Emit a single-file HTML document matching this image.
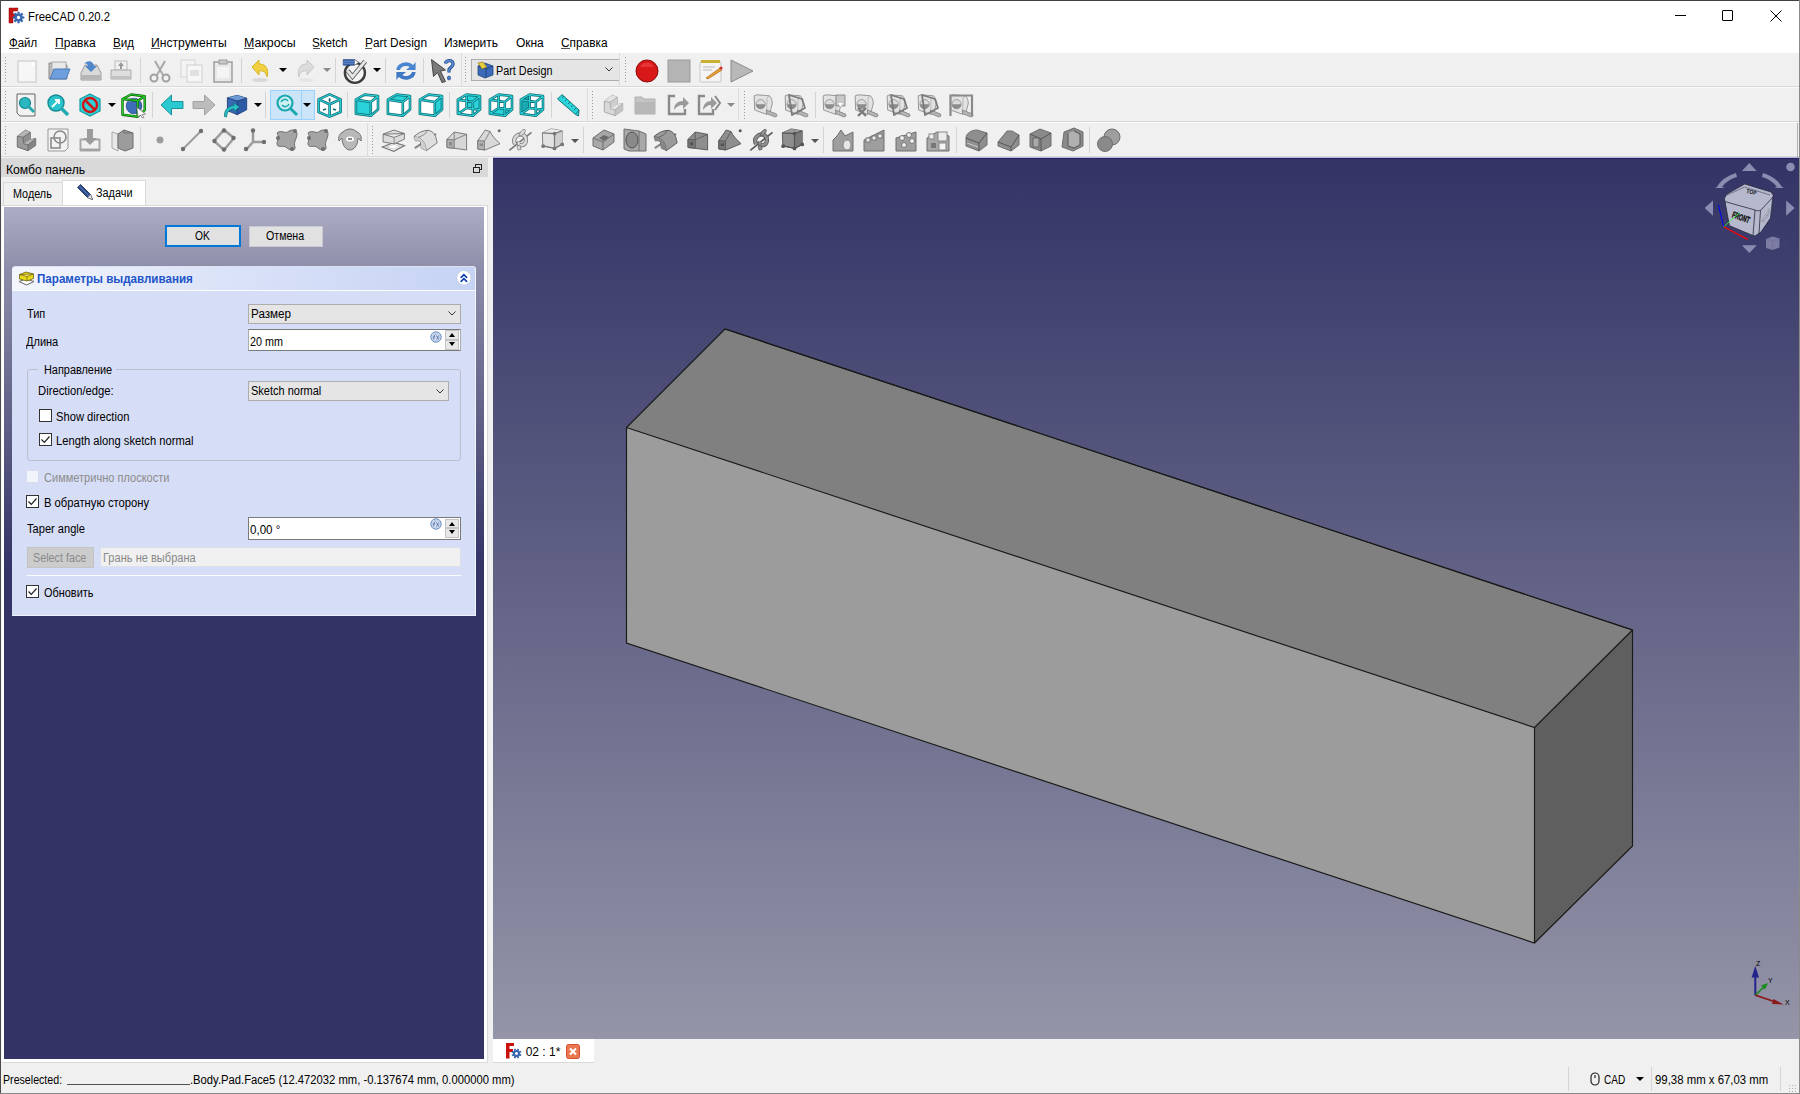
<!DOCTYPE html>
<html><head><meta charset="utf-8">
<style>
*{margin:0;padding:0;box-sizing:border-box}
html,body{width:1800px;height:1094px;overflow:hidden;background:#f0f0f0;font-family:"Liberation Sans",sans-serif;font-size:12px;color:#000}
.a{position:absolute}
.t{position:absolute;white-space:nowrap;line-height:12px;transform-origin:0 0}
svg.a{overflow:visible}
</style></head><body>
<div class="a" style="left:0px;top:0px;width:1800px;height:53px;background:#fff;"></div>
<div class="a" style="left:0px;top:0px;width:1800px;height:1px;background:#404040;"></div>
<div class="a" style="left:0px;top:0px;width:1px;height:1094px;background:#4a4a4a;"></div>
<svg class="a" style="left:7px;top:6px" width="18" height="19" viewBox="0 0 18 19"><path d="M2,2 h9 l-.5,3 H6 v3 h4 l-.5,3 H6 v6 H2 z" fill="#c81414" stroke="#8a0a0a" stroke-width=".5"/><g transform="translate(11.5,11.5)"><circle r="4" fill="#3a68b0"/><g fill="#3a68b0"><rect x="-1.1" y="-5.8" width="2.2" height="11.6" transform="rotate(0)"/><rect x="-1.1" y="-5.8" width="2.2" height="11.6" transform="rotate(45)"/><rect x="-1.1" y="-5.8" width="2.2" height="11.6" transform="rotate(90)"/><rect x="-1.1" y="-5.8" width="2.2" height="11.6" transform="rotate(135)"/></g><circle r="1.7" fill="#fff"/></g></svg>
<div class="t" style="left:28.2px;top:11px;transform:scaleX(0.9458);">FreeCAD 0.20.2</div>
<div class="a" style="left:1675px;top:15px;width:11px;height:1px;background:#000;"></div>
<div class="a" style="left:1722px;top:10px;width:11px;height:11px;background:transparent;border:1px solid #000;border-radius:1px"></div>
<svg class="a" style="left:1770px;top:10px" width="12" height="12" viewBox="0 0 12 12"><path d="M0.5 0.5l11 11M11.5 0.5l-11 11" stroke="#000" stroke-width="1"/></svg>
<div class="t" style="left:8.8px;top:37px;transform:scaleX(0.9525);">Файл</div>
<div class="t" style="left:55.1px;top:37px;">Правка</div>
<div class="t" style="left:112.8px;top:37px;transform:scaleX(0.9677);">Вид</div>
<div class="t" style="left:151.2px;top:37px;transform:scaleX(1.0107);">Инструменты</div>
<div class="t" style="left:244.0px;top:37px;transform:scaleX(1.0320);">Макросы</div>
<div class="t" style="left:312.2px;top:37px;transform:scaleX(0.9700);">Sketch</div>
<div class="t" style="left:364.7px;top:37px;transform:scaleX(0.9888);">Part Design</div>
<div class="t" style="left:443.9px;top:37px;">Измерить</div>
<div class="t" style="left:515.9px;top:37px;">Окна</div>
<div class="t" style="left:561.1px;top:37px;transform:scaleX(0.9873);">Справка</div>
<div class="a" style="left:9px;top:48px;width:10px;height:1px;background:#555;"></div>
<div class="a" style="left:55px;top:48px;width:9px;height:1px;background:#555;"></div>
<div class="a" style="left:113px;top:48px;width:8px;height:1px;background:#555;"></div>
<div class="a" style="left:151px;top:48px;width:9px;height:1px;background:#555;"></div>
<div class="a" style="left:244px;top:48px;width:10px;height:1px;background:#555;"></div>
<div class="a" style="left:313px;top:48px;width:7px;height:1px;background:#555;"></div>
<div class="a" style="left:365px;top:48px;width:7px;height:1px;background:#555;"></div>
<div class="a" style="left:561px;top:48px;width:9px;height:1px;background:#555;"></div>
<div class="a" style="left:1px;top:53px;width:1798px;height:104px;background:#f0f0f0;"></div>
<div class="a" style="left:1px;top:86px;width:1798px;height:1px;background:#d8d8d8;"></div>
<div class="a" style="left:1px;top:87px;width:1798px;height:1px;background:#fbfbfb;"></div>
<div class="a" style="left:1px;top:121px;width:1798px;height:1px;background:#d8d8d8;"></div>
<div class="a" style="left:1px;top:122px;width:1798px;height:1px;background:#fbfbfb;"></div>
<div class="a" style="left:1px;top:156px;width:1798px;height:1px;background:#d8d8d8;"></div>
<div class="a" style="left:5px;top:57px;width:1px;height:27px;background:repeating-linear-gradient(#9a9a9a 0 1px,transparent 1px 3px)"></div>
<svg class="a" style="left:15px;top:59px" width="24" height="24" viewBox="0 0 24 24"><rect x="3" y="2" width="18" height="21" fill="#f6f6f6" stroke="#c4c4c4"/><circle cx="18" cy="5" r="2" fill="#fff"/></svg>
<svg class="a" style="left:46px;top:59px" width="24" height="24" viewBox="0 0 24 24"><path d="M3 4h7l2 2h9v14H3z" fill="#bdbdbd" stroke="#8a8a8a"/><rect x="6" y="3" width="14" height="8" fill="#e8e8e8" stroke="#aaa"/><path d="M4 20l4-10h16l-4 10z" fill="#6f9fdc" stroke="#4a7cc0"/></svg>
<svg class="a" style="left:79px;top:59px" width="24" height="24" viewBox="0 0 24 24"><path d="M2 14l4-8h12l4 8v7H2z" fill="#d9d9d9" stroke="#9a9a9a"/><rect x="3" y="16" width="18" height="4" fill="#b5b5b5"/><path d="M5 5c3-4 9-4 10 2h3l-6 6-6-6h3c0-2-2-3-4-2z" fill="#4f86cc"/></svg>
<svg class="a" style="left:109px;top:59px" width="24" height="24" viewBox="0 0 24 24"><rect x="6" y="2" width="12" height="9" fill="#f0f0f0" stroke="#bbb"/><path d="M2 11h20v9H2z" fill="#dedede" stroke="#aaa"/><rect x="3" y="17" width="18" height="3" fill="#c2c2c2"/><path d="M12 3l-3 4h2v3h2V7h2z" fill="#999"/></svg>
<div class="a" style="left:140px;top:58px;width:1px;height:25px;background:#d4d4d4;"></div>
<svg class="a" style="left:148px;top:59px" width="24" height="24" viewBox="0 0 24 24"><path d="M7 2l8 14M17 2L9 16" stroke="#a8a8a8" stroke-width="2" fill="none"/><circle cx="6" cy="19" r="3.5" fill="none" stroke="#a0a0a0" stroke-width="2"/><circle cx="18" cy="19" r="3.5" fill="none" stroke="#a0a0a0" stroke-width="2"/></svg>
<svg class="a" style="left:179px;top:59px" width="24" height="24" viewBox="0 0 24 24"><rect x="2" y="1" width="14" height="17" fill="#f3f3f3" stroke="#d4d4d4"/><rect x="8" y="6" width="15" height="17" fill="#f6f6f6" stroke="#d0d0d0"/><rect x="11" y="11" width="9" height="6" fill="#e0e0e0"/></svg>
<svg class="a" style="left:211px;top:59px" width="24" height="24" viewBox="0 0 24 24"><rect x="3" y="3" width="18" height="20" fill="#e8e8e8" stroke="#9e9e9e" stroke-width="1.5"/><rect x="8" y="1" width="8" height="4" fill="#c8c8c8" stroke="#999"/><rect x="6" y="8" width="12" height="11" fill="#f4f4f4"/></svg>
<div class="a" style="left:241px;top:58px;width:1px;height:25px;background:#d4d4d4;"></div>
<svg class="a" style="left:248px;top:59px" width="24" height="24" viewBox="0 0 24 24"><path d="M4 8l7-7v4c7 0 10 5 8 13-1-5-4-7-8-6v4z" fill="#f0d040" stroke="#d8b420"/><ellipse cx="12" cy="21" rx="8" ry="2" fill="#d8d8d8"/></svg>
<div class="a" style="left:279px;top:68px;width:0;height:0;border-left:4px solid transparent;border-right:4px solid transparent;border-top:4px solid #000"></div>
<svg class="a" style="left:294px;top:59px" width="24" height="24" viewBox="0 0 24 24"><path d="M20 8l-7-7v4C6 5 3 10 5 18c1-5 4-7 8-6v4z" fill="#dcdcdc" stroke="#c8c8c8"/><ellipse cx="12" cy="21" rx="8" ry="2" fill="#e6e6e6"/></svg>
<div class="a" style="left:323px;top:68px;width:0;height:0;border-left:4px solid transparent;border-right:4px solid transparent;border-top:4px solid #8a8a8a"></div>
<div class="a" style="left:335px;top:58px;width:1px;height:25px;background:#d4d4d4;"></div>
<svg class="a" style="left:343px;top:59px" width="24" height="24" viewBox="0 0 24 24"><circle cx="11.9" cy="13.9" r="10" fill="#f4f4f4" stroke="#3c3c3c" stroke-width="2.4"/><path d="M4.6,11.8 L9.5,17.7 L22.2,2.2" fill="none" stroke="#5a5a5a" stroke-width="4.6"/><path d="M4.6,11.8 L9.5,17.7 L22.2,2.2" fill="none" stroke="#e6e6e6" stroke-width="2.8"/><path d="M0.2,0.6 H11.5 L15.7,3.3 L11.5,6.2 H0.2 Z" fill="#3a66b0" stroke="#1e3a70" stroke-width=".6"/><path d="M11.5,0.6 L15.7,3.3 L11.5,6.2 Z" fill="#fff" stroke="#555" stroke-width=".5"/><path d="M0.2,2.3 H11.5 M0.2,4.4 H11.5" stroke="#6a90d0" stroke-width=".7"/></svg>
<div class="a" style="left:373px;top:68px;width:0;height:0;border-left:4px solid transparent;border-right:4px solid transparent;border-top:4px solid #000"></div>
<div class="a" style="left:385px;top:58px;width:1px;height:25px;background:#d4d4d4;"></div>
<svg class="a" style="left:394px;top:59px" width="24" height="24" viewBox="0 0 24 24"><g transform="translate(-2.4,0) scale(1.2,1)"><path d="M4 11a8 8 0 0 1 14-5l2-3v8h-8l3-3a5 5 0 0 0-8 3z" fill="#4a86d0"/><path d="M20 13a8 8 0 0 1-14 5l-2 3v-8h8l-3 3a5 5 0 0 0 8-3z" fill="#3f78c4"/></g></svg>
<div class="a" style="left:423px;top:58px;width:1px;height:25px;background:#d4d4d4;"></div>
<svg class="a" style="left:431px;top:59px" width="24" height="24" viewBox="0 0 24 24"><path d="M0.5,0.5 L14.5,11 L9.5,12 L14.5,22.5 L11,23.5 L6.5,13.5 L2.5,17.5 Z" fill="#7a7a7a" stroke="#3a3a3a" stroke-width=".9" stroke-linejoin="round"/><path d="M14.5,4.5 C15,1 21,0.5 22,4 C23,7 19,8.5 18,10.5 V13.5" fill="none" stroke="#1e4c90" stroke-width="3.2"/><path d="M14.5,4.5 C15,1 21,0.5 22,4 C23,7 19,8.5 18,10.5 V13.5" fill="none" stroke="#5a8ad0" stroke-width="1.6"/><ellipse cx="18" cy="19" rx="1.6" ry="2" fill="#4a7ac8" stroke="#1e4c90" stroke-width=".7"/></svg>
<div class="a" style="left:461px;top:53px;width:1px;height:34px;background:#dcdcdc;"></div>
<div class="a" style="left:465px;top:57px;width:1px;height:27px;background:repeating-linear-gradient(#9a9a9a 0 1px,transparent 1px 3px)"></div>
<div class="a" style="left:471px;top:59px;width:149px;height:22px;background:#e5e5e5;border:1px solid #adadad"></div>
<svg class="a" style="left:477px;top:62px" width="17" height="16" viewBox="0 0 17 16"><path d="M1 4l7-3 8 3v9l-8 3-7-3z" fill="#3a6ab8" stroke="#1c3a70" stroke-width=".7"/><path d="M1 4l8 3 7-3M9 7v9" stroke="#1c3a70" stroke-width=".7" fill="none"/><path d="M1 1l5-1 4 5-5 2z" fill="#e8d040" stroke="#806010" stroke-width=".6"/></svg>
<div class="t" style="left:496.1px;top:65px;transform:scaleX(0.9011);">Part Design</div>
<svg class="a" style="left:605px;top:67px" width="8" height="5" viewBox="0 0 8 5"><path d="M0.5 0.5L4 4l3.5-3.5" stroke="#333" fill="none"/></svg>
<div class="a" style="left:619px;top:53px;width:1px;height:34px;background:#dcdcdc;"></div>
<div class="a" style="left:625px;top:57px;width:1px;height:27px;background:repeating-linear-gradient(#9a9a9a 0 1px,transparent 1px 3px)"></div>
<svg class="a" style="left:635px;top:59px" width="24" height="24" viewBox="0 0 24 24"><circle cx="12" cy="12" r="11" fill="#d81818" stroke="#8a0c0c"/><path d="M5 8a8 8 0 0 1 14 0" fill="#ec4a4a" opacity=".6"/></svg>
<svg class="a" style="left:667px;top:59px" width="24" height="24" viewBox="0 0 24 24"><rect x="1" y="1" width="22" height="22" fill="#b4b4b4" stroke="#9a9a9a"/></svg>
<svg class="a" style="left:699px;top:59px" width="24" height="24" viewBox="0 0 24 24"><rect x="1" y="3" width="21" height="20" rx="1" fill="#f4f4f4" stroke="#c8c8c8"/><rect x="2" y="1" width="19" height="3" fill="#c8b030"/><path d="M4 8h12M4 11h9" stroke="#bbb"/><path d="M7 19l14-10 2 2-14 9z" fill="#e8a030" stroke="#a06010" stroke-width=".6"/><circle cx="22" cy="9" r="1.6" fill="#d03030"/></svg>
<svg class="a" style="left:730px;top:59px" width="24" height="24" viewBox="0 0 24 24"><path d="M1 1l22 11L1 23z" fill="#b8b8b8" stroke="#8a8a8a"/></svg>
<div class="a" style="left:5px;top:91px;width:1px;height:28px;background:repeating-linear-gradient(#9a9a9a 0 1px,transparent 1px 3px)"></div>
<svg class="a" style="left:15px;top:93px" width="24" height="24" viewBox="0 0 24 24"><path d="M2 1h18v22H5l-3-3z" fill="#f2f2f2" stroke="#666"/><circle cx="10" cy="10" r="5.5" fill="#2ab8c0" stroke="#118890" stroke-width="1.2"/><path d="M14 14l5 5" stroke="#22a8b0" stroke-width="3"/></svg>
<svg class="a" style="left:46px;top:93px" width="24" height="24" viewBox="0 0 24 24"><circle cx="10" cy="10" r="8" fill="#2cc4cc" stroke="#108a92" stroke-width="1.4"/><path d="M15 15l7 7" stroke="#22aab2" stroke-width="3.5"/><path d="M6 14l7-7m-4 0h4v4" stroke="#fff" stroke-width="1.8" fill="none"/></svg>
<svg class="a" style="left:78px;top:93px" width="24" height="24" viewBox="0 0 24 24"><path d="M12 1l10 5v12l-10 5-10-5V6z" fill="#30d0d8" stroke="#129aa2" stroke-width="1.2"/><circle cx="12" cy="12" r="7" fill="none" stroke="#d01818" stroke-width="2.5"/><path d="M7 7l10 10" stroke="#d01818" stroke-width="2.5"/></svg>
<div class="a" style="left:108px;top:103px;width:0;height:0;border-left:4px solid transparent;border-right:4px solid transparent;border-top:4px solid #000"></div>
<svg class="a" style="left:122px;top:93px" width="24" height="24" viewBox="0 0 24 24"><path d="M0.5,6 L9.2,1.5 L22.7,3.2 L22.7,17.2 L15.7,23.7 L0.5,21.7 Z" fill="#f4f4f4"/><circle cx="12" cy="13" r="7.8" fill="#3d6cb8" stroke="#1c3c78" stroke-width=".7"/><path d="M7,9 a6,6 0 0 1 8,-2" stroke="#8ab0e8" stroke-width="1.2" fill="none"/><path d="M0.5,6 L9.2,1.5 L22.7,3.2 L22.7,17.2 L15.7,23.7 L0.5,21.7 Z M0.5,6 L15.7,7.7 L22.7,3.2 M15.7,7.7 V23.7" fill="none" stroke="#0c5a0c" stroke-width="2.4" stroke-linejoin="round"/><path d="M0.5,6 L9.2,1.5 L22.7,3.2 L22.7,17.2 L15.7,23.7 L0.5,21.7 Z M0.5,6 L15.7,7.7 L22.7,3.2 M15.7,7.7 V23.7" fill="none" stroke="#22cc22" stroke-width="1.2" stroke-linejoin="round"/><path d="M14.9,14.3 L23.5,21 L20,21.5 L22,24.5 L20.5,25 L18.5,22 L16,24 Z" fill="#fff" stroke="#666" stroke-width=".7"/></svg>
<div class="a" style="left:152px;top:92px;width:1px;height:26px;background:#d4d4d4;"></div>
<svg class="a" style="left:160px;top:93px" width="24" height="24" viewBox="0 0 24 24"><path d="M1,12 L11.5,2 V8.5 H23 V15.5 H11.5 V22 Z" fill="#2ac8d0" stroke="#0e8a92" stroke-width=".9" stroke-linejoin="round"/></svg>
<svg class="a" style="left:192px;top:93px" width="24" height="24" viewBox="0 0 24 24"><path d="M23,12 L12.5,2 V8.5 H1 V15.5 H12.5 V22 Z" fill="#bcbcbc" stroke="#9c9c9c" stroke-width=".9" stroke-linejoin="round"/></svg>
<svg class="a" style="left:224px;top:93px" width="24" height="24" viewBox="0 0 24 24"><path d="M3.4,4.8 L13.2,2.3 L22.7,5.2 L22.7,16.7 L13.2,21.7 L3.4,17.6 Z" fill="#3a6ab6" stroke="#1a3468" stroke-width=".8" stroke-linejoin="round"/><path d="M3.4,4.8 L13.2,2.3 L22.7,5.2 L13.2,8.1 Z" fill="#6a9ad8"/><path d="M13.2,8.1 L22.7,5.2 L22.7,16.7 L13.2,21.7 Z" fill="#2c5aa4"/><path d="M3.4,4.8 L13.2,8.1 L22.7,5.2 M13.2,8.1 V21.7" stroke="#1a3468" stroke-width=".8" fill="none"/><path d="M0.5,23.5 C0,17 4,13 10,12.5 L9.5,9.5 L15.5,14 L10,18.5 L10,15.8 C6,16 3,18.5 2.5,24 Z" fill="#28c0c8" stroke="#0b6a70" stroke-width=".7" stroke-linejoin="round"/></svg>
<div class="a" style="left:254px;top:103px;width:0;height:0;border-left:4px solid transparent;border-right:4px solid transparent;border-top:4px solid #000"></div>
<div class="a" style="left:265px;top:92px;width:1px;height:26px;background:#d4d4d4;"></div>
<div class="a" style="left:270px;top:90px;width:45px;height:30px;background:#cce4f7;border:1px solid #99d1ff"></div>
<div class="a" style="left:301px;top:91px;width:1px;height:28px;background:#99d1ff;"></div>
<svg class="a" style="left:275px;top:93px" width="24" height="24" viewBox="0 0 24 24"><circle cx="10" cy="10" r="7.5" fill="#ccf0f2" stroke="#1aa8b0" stroke-width="2.2"/><path d="M15 15l7 7" stroke="#1aa8b0" stroke-width="3"/><path d="M6 9a4 4 0 0 1 7-1m1 3a4 4 0 0 1-7 1" stroke="#1aa8b0" stroke-width="1.5" fill="none"/></svg>
<div class="a" style="left:303px;top:103px;width:0;height:0;border-left:4px solid transparent;border-right:4px solid transparent;border-top:4px solid #000"></div>
<svg class="a" style="left:318px;top:93px" width="24" height="24" viewBox="0 0 24 24"><path d="M11.6,1.4 L22.6,6.4 L22.6,19 L11.6,23.6 L0.6,19 L0.6,6.4 Z" fill="#fff"/><path d="M11.6,1.4 L22.6,6.4 L22.6,19 L11.6,23.6 L0.6,19 L0.6,6.4 Z M0.6,6.4 L11.6,11.2 L22.6,6.4 M11.6,11.2 L11.6,23.6" fill="none" stroke="#0d6a70" stroke-width="2.6" stroke-linejoin="round"/><path d="M11.6,1.4 L22.6,6.4 L22.6,19 L11.6,23.6 L0.6,19 L0.6,6.4 Z M0.6,6.4 L11.6,11.2 L22.6,6.4 M11.6,11.2 L11.6,23.6" fill="none" stroke="#2ad2da" stroke-width="1.1" stroke-linejoin="round"/><ellipse cx="11.6" cy="7" rx="1" ry="2" fill="#0d6a70"/><path d="M5 17l3-1M15 16l3 1" stroke="#0d6a70" stroke-width="1.6"/></svg>
<div class="a" style="left:347px;top:92px;width:1px;height:26px;background:#d4d4d4;"></div>
<svg class="a" style="left:355px;top:93px" width="24" height="24" viewBox="0 0 24 24"><path d="M0.9,6.6 L15.8,9 L15.8,22.8 L0.9,20.8 Z" fill="#2ad2da"/><path d="M0.9,6.6 L9.6,1.6 L23,3 L15.8,9 Z M15.8,9 L23,3 L23,16.6 L15.8,22.8 Z" fill="#fff"/><path d="M0.9,6.6 L9.6,1.6 L23,3 L23,16.6 L15.8,22.8 L0.9,20.8 Z M0.9,6.6 L15.8,9 L23,3 M15.8,9 L15.8,22.8" fill="none" stroke="#0d6a70" stroke-width="2.6" stroke-linejoin="round"/><path d="M0.9,6.6 L9.6,1.6 L23,3 L23,16.6 L15.8,22.8 L0.9,20.8 Z M0.9,6.6 L15.8,9 L23,3 M15.8,9 L15.8,22.8" fill="none" stroke="#2ad2da" stroke-width="1.1" stroke-linejoin="round"/></svg>
<svg class="a" style="left:387px;top:93px" width="24" height="24" viewBox="0 0 24 24"><path d="M0.9,6.6 L9.6,1.6 L23,3 L15.8,9 Z" fill="#2ad2da"/><path d="M0.9,6.6 L15.8,9 L15.8,22.8 L0.9,20.8 Z M15.8,9 L23,3 L23,16.6 L15.8,22.8 Z" fill="#fff"/><path d="M0.9,6.6 L9.6,1.6 L23,3 L23,16.6 L15.8,22.8 L0.9,20.8 Z M0.9,6.6 L15.8,9 L23,3 M15.8,9 L15.8,22.8" fill="none" stroke="#0d6a70" stroke-width="2.6" stroke-linejoin="round"/><path d="M0.9,6.6 L9.6,1.6 L23,3 L23,16.6 L15.8,22.8 L0.9,20.8 Z M0.9,6.6 L15.8,9 L23,3 M15.8,9 L15.8,22.8" fill="none" stroke="#2ad2da" stroke-width="1.1" stroke-linejoin="round"/></svg>
<svg class="a" style="left:419px;top:93px" width="24" height="24" viewBox="0 0 24 24"><path d="M15.8,9 L23,3 L23,16.6 L15.8,22.8 Z" fill="#2ad2da"/><path d="M0.9,6.6 L15.8,9 L15.8,22.8 L0.9,20.8 Z M0.9,6.6 L9.6,1.6 L23,3 L15.8,9 Z" fill="#fff"/><path d="M0.9,6.6 L9.6,1.6 L23,3 L23,16.6 L15.8,22.8 L0.9,20.8 Z M0.9,6.6 L15.8,9 L23,3 M15.8,9 L15.8,22.8" fill="none" stroke="#0d6a70" stroke-width="2.6" stroke-linejoin="round"/><path d="M0.9,6.6 L9.6,1.6 L23,3 L23,16.6 L15.8,22.8 L0.9,20.8 Z M0.9,6.6 L15.8,9 L23,3 M15.8,9 L15.8,22.8" fill="none" stroke="#2ad2da" stroke-width="1.1" stroke-linejoin="round"/></svg>
<div class="a" style="left:449px;top:92px;width:1px;height:26px;background:#d4d4d4;"></div>
<svg class="a" style="left:457px;top:93px" width="24" height="24" viewBox="0 0 24 24"><path d="M0.9,6.6 L9.6,1.6 L23,3 L23,16.6 L15.8,22.8 L0.9,20.8 Z" fill="#fff"/><path d="M9.6,1.6 L23,3 L23,16.6 L9.6,15 Z" fill="#2ad2da"/><path d="M0.9,6.6 L9.6,1.6 L23,3 L23,16.6 L15.8,22.8 L0.9,20.8 Z M0.9,6.6 L15.8,9 L23,3 M15.8,9 L15.8,22.8 M9.6,1.6 L9.6,15 L23,16.6 M9.6,15 L0.9,20.8" fill="none" stroke="#0d6a70" stroke-width="2.6" stroke-linejoin="round"/><path d="M0.9,6.6 L9.6,1.6 L23,3 L23,16.6 L15.8,22.8 L0.9,20.8 Z M0.9,6.6 L15.8,9 L23,3 M15.8,9 L15.8,22.8 M9.6,1.6 L9.6,15 L23,16.6 M9.6,15 L0.9,20.8" fill="none" stroke="#2ad2da" stroke-width="1.1" stroke-linejoin="round"/></svg>
<svg class="a" style="left:489px;top:93px" width="24" height="24" viewBox="0 0 24 24"><path d="M0.9,6.6 L9.6,1.6 L23,3 L23,16.6 L15.8,22.8 L0.9,20.8 Z" fill="#fff"/><path d="M0.9,20.8 L9.6,15 L23,16.6 L15.8,22.8 Z" fill="#2ad2da"/><path d="M0.9,6.6 L9.6,1.6 L23,3 L23,16.6 L15.8,22.8 L0.9,20.8 Z M0.9,6.6 L15.8,9 L23,3 M15.8,9 L15.8,22.8 M9.6,1.6 L9.6,15 L23,16.6 M9.6,15 L0.9,20.8" fill="none" stroke="#0d6a70" stroke-width="2.6" stroke-linejoin="round"/><path d="M0.9,6.6 L9.6,1.6 L23,3 L23,16.6 L15.8,22.8 L0.9,20.8 Z M0.9,6.6 L15.8,9 L23,3 M15.8,9 L15.8,22.8 M9.6,1.6 L9.6,15 L23,16.6 M9.6,15 L0.9,20.8" fill="none" stroke="#2ad2da" stroke-width="1.1" stroke-linejoin="round"/></svg>
<svg class="a" style="left:520px;top:93px" width="24" height="24" viewBox="0 0 24 24"><path d="M0.9,6.6 L9.6,1.6 L23,3 L23,16.6 L15.8,22.8 L0.9,20.8 Z" fill="#fff"/><path d="M0.9,6.6 L9.6,1.6 L9.6,15 L0.9,20.8 Z" fill="#1aaab2"/><path d="M0.9,6.6 L9.6,1.6 L23,3 L23,16.6 L15.8,22.8 L0.9,20.8 Z M0.9,6.6 L15.8,9 L23,3 M15.8,9 L15.8,22.8 M9.6,1.6 L9.6,15 L23,16.6 M9.6,15 L0.9,20.8" fill="none" stroke="#0d6a70" stroke-width="2.6" stroke-linejoin="round"/><path d="M0.9,6.6 L9.6,1.6 L23,3 L23,16.6 L15.8,22.8 L0.9,20.8 Z M0.9,6.6 L15.8,9 L23,3 M15.8,9 L15.8,22.8 M9.6,1.6 L9.6,15 L23,16.6 M9.6,15 L0.9,20.8" fill="none" stroke="#2ad2da" stroke-width="1.1" stroke-linejoin="round"/></svg>
<div class="a" style="left:551px;top:92px;width:1px;height:26px;background:#d4d4d4;"></div>
<svg class="a" style="left:556px;top:93px" width="24" height="24" viewBox="0 0 24 24"><path d="M1.5,6 L6,1.5 L23,17 L22.5,23 L19.5,21.5 Z" fill="#2ad2da" stroke="#0d6a70" stroke-width=".9" stroke-linejoin="round"/><path d="M19.5,21.5 L23,17" stroke="#0d6a70" stroke-width=".8"/><path d="M6,5 l2,-2 M9,8 l1.5,-1.5 M12,11 l2,-2 M15,14 l1.5,-1.5 M18,17 l2,-2" stroke="#0d6a70" stroke-width=".9"/></svg>
<div class="a" style="left:587px;top:88px;width:1px;height:33px;background:#dcdcdc;"></div>
<div class="a" style="left:592px;top:91px;width:1px;height:28px;background:repeating-linear-gradient(#9a9a9a 0 1px,transparent 1px 3px)"></div>
<svg class="a" style="left:602px;top:93px" width="24" height="24" viewBox="0 0 24 24"><path d="M2.3,8.3 L10.3,2 L15.3,4.3 L15.3,11.5 L20.7,10.5 L20.7,17.5 L13,22.7 L2.3,19 Z" fill="#d8d8d8" stroke="#a4a4a4" stroke-width=".9" stroke-linejoin="round"/><path d="M2.3,8.3 L10.3,2 L15.3,4.3 L8,9.3 Z" fill="#e4e4e4"/><path d="M8,9.3 L15.3,4.3 L15.3,11.5 L8.7,15.7 Z" fill="#cfcfcf"/><path d="M8.7,15.7 L15.3,11.5 L20.7,10.5 L13,17 Z" fill="#e4e4e4"/><path d="M13,17 L20.7,10.5 L20.7,17.5 L13,22.7 Z" fill="#c4c4c4"/><path d="M2.3,8.3 L8,9.3 L15.3,4.3 M8,9.3 L8.7,15.7 L13,17 L20.7,10.5 M13,17 L13,22.7" fill="none" stroke="#a4a4a4" stroke-width=".8"/></svg>
<svg class="a" style="left:633px;top:93px" width="24" height="24" viewBox="0 0 24 24"><path d="M2 4h7l2 2h11v15H2z" fill="#c4c4c4" stroke="#b0b0b0"/><path d="M2 9h20v12H2z" fill="#b8b8b8"/></svg>
<svg class="a" style="left:666px;top:93px" width="24" height="24" viewBox="0 0 24 24"><path d="M3 7V3h6M3 7v14h16v-5" stroke="#8a8a8a" stroke-width="2.4" fill="none"/><path d="M8 17c0-6 4-9 9-9V4l6 6-6 6v-4c-4 0-7 2-9 5z" fill="#9a9a9a"/></svg>
<svg class="a" style="left:697px;top:93px" width="24" height="24" viewBox="0 0 24 24"><path d="M2 7V3h6M2 7v14h14v-5" stroke="#8a8a8a" stroke-width="2.4" fill="none"/><path d="M6 17c0-6 4-9 8-9V4l6 6-6 6v-4c-3 0-6 2-8 5z" fill="#9a9a9a"/><path d="M18 3l5 7-5 7" stroke="#8a8a8a" stroke-width="2" fill="none"/></svg>
<div class="a" style="left:727px;top:103px;width:0;height:0;border-left:4px solid transparent;border-right:4px solid transparent;border-top:4px solid #8a8a8a"></div>
<div class="a" style="left:738px;top:88px;width:1px;height:33px;background:#dcdcdc;"></div>
<div class="a" style="left:744px;top:91px;width:1px;height:28px;background:repeating-linear-gradient(#9a9a9a 0 1px,transparent 1px 3px)"></div>
<svg class="a" style="left:754px;top:93px" width="24" height="24" viewBox="0 0 24 24"><path d="M0.2,2.8 L3,1.8 L15.4,2.8 C17.5,5 18.5,8 18.2,11 L16,19 L12.7,21.4 L0.6,17 Z" fill="#e2e2e2" stroke="#8e8e8e" stroke-width=".9" stroke-linejoin="round"/><path d="M12.7,21.4 L13,5 L15.4,2.8" stroke="#a8a8a8" stroke-width=".7" fill="none"/><path d="M12.5,17 L22.5,21 L23,23 L21,24 L12.5,20.5 Z" fill="#b4b4b4" stroke="#808080" stroke-width=".8"/><circle cx="6.6" cy="11.2" r="4.6" fill="#dcdcdc" stroke="#8a8a8a" stroke-width=".8"/><path d="M2,11.2 A4.6,4.6 0 0 0 11.2,11.2 Z" fill="#8c8c8c"/></svg>
<svg class="a" style="left:785px;top:93px" width="24" height="24" viewBox="0 0 24 24"><path d="M0.2,2.8 L3,1.8 L15.4,2.8 C17.5,5 18.5,8 18.2,11 L16,19 L12.7,21.4 L0.6,17 Z" fill="#e2e2e2" stroke="#8e8e8e" stroke-width=".9" stroke-linejoin="round"/><path d="M12.7,21.4 L13,5 L15.4,2.8" stroke="#a8a8a8" stroke-width=".7" fill="none"/><path d="M12.5,17 L22.5,21 L23,23 L21,24 L12.5,20.5 Z" fill="#b4b4b4" stroke="#808080" stroke-width=".8"/><circle cx="6.6" cy="11.2" r="4.6" fill="#dcdcdc" stroke="#8a8a8a" stroke-width=".8"/><path d="M2,11.2 A4.6,4.6 0 0 0 11.2,11.2 Z" fill="#8c8c8c"/><path d="M4,2 L17,6 L20,15 L7,22 Z" fill="none" stroke="#7a7a7a" stroke-width="1.8" stroke-linejoin="round"/></svg>
<div class="a" style="left:815px;top:92px;width:1px;height:26px;background:#d4d4d4;"></div>
<svg class="a" style="left:823px;top:93px" width="24" height="24" viewBox="0 0 24 24"><path d="M0.2,2.8 L3,1.8 L15.4,2.8 C17.5,5 18.5,8 18.2,11 L16,19 L12.7,21.4 L0.6,17 Z" fill="#e2e2e2" stroke="#8e8e8e" stroke-width=".9" stroke-linejoin="round"/><path d="M12.7,21.4 L13,5 L15.4,2.8" stroke="#a8a8a8" stroke-width=".7" fill="none"/><path d="M12.5,17 L22.5,21 L23,23 L21,24 L12.5,20.5 Z" fill="#b4b4b4" stroke="#808080" stroke-width=".8"/><circle cx="6.6" cy="11.2" r="4.6" fill="#dcdcdc" stroke="#8a8a8a" stroke-width=".8"/><path d="M2,11.2 A4.6,4.6 0 0 0 11.2,11.2 Z" fill="#8c8c8c"/><path d="M13,2 h9 v11 h-9 z" fill="#c8c8c8" stroke="#7a7a7a" stroke-width=".8"/><path d="M15,10 l5,0 -2.5,4 z" fill="#fff"/></svg>
<svg class="a" style="left:855px;top:93px" width="24" height="24" viewBox="0 0 24 24"><path d="M0.2,2.8 L3,1.8 L15.4,2.8 C17.5,5 18.5,8 18.2,11 L16,19 L12.7,21.4 L0.6,17 Z" fill="#e2e2e2" stroke="#8e8e8e" stroke-width=".9" stroke-linejoin="round"/><path d="M12.7,21.4 L13,5 L15.4,2.8" stroke="#a8a8a8" stroke-width=".7" fill="none"/><path d="M12.5,17 L22.5,21 L23,23 L21,24 L12.5,20.5 Z" fill="#b4b4b4" stroke="#808080" stroke-width=".8"/><circle cx="6.6" cy="11.2" r="4.6" fill="#dcdcdc" stroke="#8a8a8a" stroke-width=".8"/><path d="M2,11.2 A4.6,4.6 0 0 0 11.2,11.2 Z" fill="#8c8c8c"/><path d="M3,15 L11,23 M11,15 L3,23" stroke="#7a7a7a" stroke-width="2.4"/></svg>
<svg class="a" style="left:887px;top:93px" width="24" height="24" viewBox="0 0 24 24"><path d="M0.2,2.8 L3,1.8 L15.4,2.8 C17.5,5 18.5,8 18.2,11 L16,19 L12.7,21.4 L0.6,17 Z" fill="#e2e2e2" stroke="#8e8e8e" stroke-width=".9" stroke-linejoin="round"/><path d="M12.7,21.4 L13,5 L15.4,2.8" stroke="#a8a8a8" stroke-width=".7" fill="none"/><path d="M12.5,17 L22.5,21 L23,23 L21,24 L12.5,20.5 Z" fill="#b4b4b4" stroke="#808080" stroke-width=".8"/><circle cx="6.6" cy="11.2" r="4.6" fill="#dcdcdc" stroke="#8a8a8a" stroke-width=".8"/><path d="M2,11.2 A4.6,4.6 0 0 0 11.2,11.2 Z" fill="#8c8c8c"/><path d="M4,2 L17,6 L20,15 L7,22 Z" fill="none" stroke="#7a7a7a" stroke-width="1.8" stroke-linejoin="round"/></svg>
<svg class="a" style="left:918px;top:93px" width="24" height="24" viewBox="0 0 24 24"><path d="M0.2,2.8 L3,1.8 L15.4,2.8 C17.5,5 18.5,8 18.2,11 L16,19 L12.7,21.4 L0.6,17 Z" fill="#e2e2e2" stroke="#8e8e8e" stroke-width=".9" stroke-linejoin="round"/><path d="M12.7,21.4 L13,5 L15.4,2.8" stroke="#a8a8a8" stroke-width=".7" fill="none"/><path d="M12.5,17 L22.5,21 L23,23 L21,24 L12.5,20.5 Z" fill="#b4b4b4" stroke="#808080" stroke-width=".8"/><circle cx="6.6" cy="11.2" r="4.6" fill="#dcdcdc" stroke="#8a8a8a" stroke-width=".8"/><path d="M2,11.2 A4.6,4.6 0 0 0 11.2,11.2 Z" fill="#8c8c8c"/><path d="M4,2 L17,6 L20,15 L7,22 Z" fill="none" stroke="#7a7a7a" stroke-width="1.8" stroke-linejoin="round"/></svg>
<svg class="a" style="left:950px;top:93px" width="24" height="24" viewBox="0 0 24 24"><path d="M0.2,2.8 L3,1.8 L15.4,2.8 C17.5,5 18.5,8 18.2,11 L16,19 L12.7,21.4 L0.6,17 Z" fill="#e2e2e2" stroke="#8e8e8e" stroke-width=".9" stroke-linejoin="round"/><path d="M12.7,21.4 L13,5 L15.4,2.8" stroke="#a8a8a8" stroke-width=".7" fill="none"/><path d="M12.5,17 L22.5,21 L23,23 L21,24 L12.5,20.5 Z" fill="#b4b4b4" stroke="#808080" stroke-width=".8"/><circle cx="6.6" cy="11.2" r="4.6" fill="#dcdcdc" stroke="#8a8a8a" stroke-width=".8"/><path d="M2,11.2 A4.6,4.6 0 0 0 11.2,11.2 Z" fill="#8c8c8c"/><path d="M0.5,23 V2.5 H22 V23" fill="none" stroke="#8a8a8a" stroke-width="2.2"/></svg>
<div class="a" style="left:5px;top:126px;width:1px;height:28px;background:repeating-linear-gradient(#9a9a9a 0 1px,transparent 1px 3px)"></div>
<svg class="a" style="left:15px;top:128px" width="24" height="24" viewBox="0 0 24 24"><path d="M2.3,8.3 L10.3,2 L15.3,4.3 L15.3,11.5 L20.7,10.5 L20.7,17.5 L13,22.7 L2.3,19 Z" fill="#9a9a9a" stroke="#666" stroke-width=".9" stroke-linejoin="round"/><path d="M2.3,8.3 L10.3,2 L15.3,4.3 L8,9.3 Z" fill="#b4b4b4"/><path d="M8,9.3 L15.3,4.3 L15.3,11.5 L8.7,15.7 Z" fill="#8e8e8e"/><path d="M8.7,15.7 L15.3,11.5 L20.7,10.5 L13,17 Z" fill="#b4b4b4"/><path d="M13,17 L20.7,10.5 L20.7,17.5 L13,22.7 Z" fill="#858585"/><path d="M2.3,8.3 L8,9.3 L15.3,4.3 M8,9.3 L8.7,15.7 L13,17 L20.7,10.5 M13,17 L13,22.7" fill="none" stroke="#666" stroke-width=".8"/></svg>
<svg class="a" style="left:46px;top:128px" width="24" height="24" viewBox="0 0 24 24"><path d="M2 1h20v19l-3 3H2z" fill="#f2f2f2" stroke="#999"/><rect x="5" y="10" width="9" height="10" fill="none" stroke="#8a8a8a" stroke-width="1.6"/><circle cx="14" cy="9" r="6" fill="none" stroke="#8a8a8a" stroke-width="1.6"/></svg>
<svg class="a" style="left:78px;top:128px" width="24" height="24" viewBox="0 0 24 24"><path d="M3 12h4v-1H2v12h20V11h-5v1h4v9H3z" fill="#9c9c9c" stroke="#aaa"/><path d="M9 1h6v9h4l-7 7-7-7h4z" fill="#9c9c9c"/></svg>
<svg class="a" style="left:110px;top:128px" width="24" height="24" viewBox="0 0 24 24"><path d="M2 4l6 2v17l-6-3z" fill="#e8e8e8" stroke="#aaa"/><path d="M8 6l6-4 9 3v15l-8 3-7-3z" fill="#9c9c9c" stroke="#6e6e6e"/><path d="M14 2v3l9 0" stroke="#6e6e6e" fill="none"/></svg>
<div class="a" style="left:140px;top:127px;width:1px;height:26px;background:#d4d4d4;"></div>
<svg class="a" style="left:148px;top:128px" width="24" height="24" viewBox="0 0 24 24"><circle cx="12" cy="12" r="3.5" fill="#9c9c9c"/></svg>
<svg class="a" style="left:180px;top:128px" width="24" height="24" viewBox="0 0 24 24"><path d="M3 21L21 3" stroke="#9c9c9c" stroke-width="2"/><circle cx="3" cy="21" r="2.2" fill="#6e6e6e"/><circle cx="21" cy="3" r="2.2" fill="#6e6e6e"/></svg>
<svg class="a" style="left:212px;top:128px" width="24" height="24" viewBox="0 0 24 24"><path d="M12 2l10 8-10 12L2 13z" fill="none" stroke="#9c9c9c" stroke-width="2.5"/><circle cx="12" cy="2.5" r="2.2" fill="#6e6e6e"/><circle cx="21.5" cy="10" r="2.2" fill="#6e6e6e"/><circle cx="12" cy="21.5" r="2.2" fill="#6e6e6e"/><circle cx="2.5" cy="13" r="2.2" fill="#6e6e6e"/></svg>
<svg class="a" style="left:243px;top:128px" width="24" height="24" viewBox="0 0 24 24"><path d="M10 2v12h12M10 14l-7 8" stroke="#9c9c9c" stroke-width="2.5" fill="none"/><circle cx="10" cy="2.5" r="2.2" fill="#6e6e6e"/><circle cx="21" cy="14" r="2.2" fill="#6e6e6e"/><circle cx="3" cy="21" r="2.2" fill="#6e6e6e"/></svg>
<svg class="a" style="left:275px;top:128px" width="24" height="24" viewBox="0 0 24 24"><path d="M2 5c5-4 8 2 12-2 4-2 8-1 8 3 0 5-4 8-2 13 1 4-5 4-8 1-4-4-9 1-10-4 0-4 3-6 0-11z" fill="#a4a4a4" stroke="#6e6e6e"/><circle cx="20" cy="3" r="2" fill="#6e6e6e"/><circle cx="3" cy="10" r="2" fill="#6e6e6e"/><circle cx="17" cy="21" r="2" fill="#6e6e6e"/></svg>
<svg class="a" style="left:306px;top:128px" width="24" height="24" viewBox="0 0 24 24"><path d="M2 5c5-4 8 2 12-2 4-2 8-1 8 3 0 5-4 8-2 13 1 4-5 4-8 1-4-4-9 1-10-4 0-4 3-6 0-11z" fill="#a4a4a4" stroke="#6e6e6e"/><circle cx="20" cy="3" r="2" fill="#6e6e6e"/><circle cx="3" cy="10" r="2" fill="#6e6e6e"/><circle cx="17" cy="21" r="2" fill="#6e6e6e"/></svg>
<svg class="a" style="left:338px;top:128px" width="24" height="24" viewBox="0 0 24 24"><path d="M5 4c4-4 10-4 14 0 3 1 5 5 4 9-2-2-3-3-3-3 0 7-4 12-8 12s-8-5-8-12c0 0-1 1-3 3-1-4 1-8 4-9z" fill="#b8b8b8" stroke="#6e6e6e"/><ellipse cx="12" cy="11" rx="4" ry="2.5" fill="#fff"/><path d="M10 11h4" stroke="#333" stroke-width="1.2"/></svg>
<div class="a" style="left:367px;top:123px;width:1px;height:34px;background:#dcdcdc;"></div>
<div class="a" style="left:372px;top:126px;width:1px;height:28px;background:repeating-linear-gradient(#9a9a9a 0 1px,transparent 1px 3px)"></div>
<svg class="a" style="left:382px;top:128px" width="24" height="24" viewBox="0 0 24 24"><path d="M0.4,19 L12,14.5 L22.4,17.6 L11.8,23.3 Z" fill="#fff" stroke="#777" stroke-width="1.2"/><path d="M4,19 L12,16.5 L18.5,18 L11.8,21 Z" fill="#fff" stroke="#aaa" stroke-width=".6"/><path d="M1.1,6.2 L11.8,2 L22.4,5.5 L22.4,11.2 L12.1,15.8 L1.1,14 Z" fill="#dcdcdc" stroke="#707070" stroke-width=".9"/><path d="M1.1,6.2 L12.1,9.4 L22.4,5.5 Z" fill="#ececec" stroke="#707070" stroke-width=".9"/><path d="M12.1,9.4 V15.8" stroke="#777" stroke-width=".8"/></svg>
<svg class="a" style="left:414px;top:128px" width="24" height="24" viewBox="0 0 24 24"><path d="M0.8,20.1 L22.1,5.8" stroke="#888" stroke-width="2.2"/><path d="M0,8.4 C4,5 9,2.5 13.6,2.3 C18,2.5 21,6 22,10 L23.2,14.8 L12.5,22.6 L7.2,20.1 L7,15 C6,13 4,12 1.5,13 Z" fill="#dedede" stroke="#6e6e6e" stroke-width=".9"/><path d="M0,8.4 L4,9.5 C8,11 11,14 12.5,22.6 M4,9.5 C8,8 12,6 13.6,2.3" fill="none" stroke="#6e6e6e" stroke-width=".8"/><path d="M0,8.4 L4,9.5 C8,11 11,14 12.5,22.6 L7.2,20.1 L7,15 C6,13 4,12 1.5,13 Z" fill="#cfcfcf"/></svg>
<svg class="a" style="left:445px;top:128px" width="24" height="24" viewBox="0 0 24 24"><path d="M2,11.4 L9.2,4 L21.6,6.3 L21.6,22 L9.2,20.3 L2,19.5 Z" fill="#d6d6d6" stroke="#707070" stroke-width=".9" stroke-linejoin="round"/><path d="M2,11.4 L9.2,11.8 L9.2,20.3 L2,19.5 Z" fill="#b0b0b0" stroke="#707070" stroke-width=".8"/><path d="M9.2,11.8 L21.6,6.3 M9.2,4 V11.8" stroke="#707070" stroke-width=".8" fill="none"/><rect x="4" y="14" width="3" height="3.5" fill="#8a8a8a"/></svg>
<svg class="a" style="left:477px;top:128px" width="24" height="24" viewBox="0 0 24 24"><path d="M0.8,12.6 L8.2,2 L13,3.5 C15,8 19,12 23,15.7 L8,22 L0.8,21 Z" fill="#d8d8d8" stroke="#707070" stroke-width=".9" stroke-linejoin="round"/><path d="M0.8,12.6 L7.4,13 L7.4,21.9 L0.8,21 Z" fill="#b4b4b4" stroke="#707070" stroke-width=".8"/><path d="M7.4,13 C10,10 11,6 13,3.5" stroke="#707070" stroke-width=".8" fill="none"/><rect x="2.5" y="15.5" width="3.5" height="2.5" fill="#8a8a8a"/><circle cx="22.2" cy="2.8" r="1.5" fill="#707070"/></svg>
<svg class="a" style="left:509px;top:128px" width="24" height="24" viewBox="0 0 24 24"><path d="M0.3,22.3 L22.5,4.4" stroke="#777" stroke-width="1.6"/><path d="M6,16 C3,10 9,5 14,7 C18,9 18,15 14,17 C11,18 9,16 10,14" fill="none" stroke="#777" stroke-width="4.2"/><path d="M6,16 C3,10 9,5 14,7 C18,9 18,15 14,17 C11,18 9,16 10,14" fill="none" stroke="#dadada" stroke-width="2.6"/><path d="M10,8 C11,3 14,1 16,1.5 C17,3 15,6 13,7.5 Z" fill="#dadada" stroke="#777" stroke-width=".8"/><path d="M8,18 L9,22 L12,21.5 L11,17 Z" fill="#dadada" stroke="#777" stroke-width=".7"/></svg>
<svg class="a" style="left:541px;top:128px" width="24" height="24" viewBox="0 0 24 24"><path d="M1.4,4.8 L10.1,0.9 L21.2,2.8 L21.2,16.4 L13.5,20.4 L1.8,17.8 Z" fill="#e2e2e2" stroke="#777" stroke-width=".9" stroke-linejoin="round"/><path d="M13.5,5.6 L21.2,2.8 L21.2,16.4 L13.5,20.4 Z" fill="#cfcfcf"/><path d="M1.4,4.8 L10.1,0.9 L21.2,2.8 L13.5,5.6 Z" fill="#ececec"/><path d="M1.4,4.8 L13.5,5.6 L21.2,2.8 M13.5,5.6 V20.4 M1.8,17.8 L13.5,20.4 L21.2,16.4" stroke="#777" stroke-width="1.2" fill="none"/><g fill="#777"><circle cx="2.2" cy="18.2" r="1.9"/><circle cx="13.5" cy="20.4" r="1.9"/><circle cx="21.2" cy="16.4" r="1.9"/><circle cx="13.5" cy="5.6" r="1.9"/></g></svg>
<div class="a" style="left:571px;top:139px;width:0;height:0;border-left:4px solid transparent;border-right:4px solid transparent;border-top:4px solid #555"></div>
<div class="a" style="left:583px;top:127px;width:1px;height:26px;background:#d4d4d4;"></div>
<svg class="a" style="left:591px;top:128px" width="24" height="24" viewBox="0 0 24 24"><path d="M2 10l11-8 10 4v8l-11 8-10-4z" fill="#a8a8a8" stroke="#6e6e6e"/><path d="M8 10l5-3 5 2-5 4z" fill="#6a6a6a"/><path d="M2 10l10 4 11-8M12 14v8" stroke="#6e6e6e" fill="none"/></svg>
<svg class="a" style="left:623px;top:128px" width="24" height="24" viewBox="0 0 24 24"><path d="M1 1l15 2 7 3v17H6l-5-2z" fill="#a8a8a8" stroke="#6e6e6e"/><ellipse cx="9" cy="12" rx="6" ry="8" fill="#8a8a8a" stroke="#555"/><path d="M16 3v20" stroke="#6e6e6e"/></svg>
<svg class="a" style="left:654px;top:128px" width="24" height="24" viewBox="0 0 24 24"><path d="M0.8,20.1 L22.1,5.8" stroke="#888" stroke-width="2.2"/><path d="M0,8.4 C4,5 9,2.5 13.6,2.3 C18,2.5 21,6 22,10 L23.2,14.8 L12.5,22.6 L7.2,20.1 L7,15 C6,13 4,12 1.5,13 Z" fill="#9a9a9a" stroke="#555" stroke-width=".9"/><path d="M0,8.4 L4,9.5 C8,11 11,14 12.5,22.6 M4,9.5 C8,8 12,6 13.6,2.3" fill="none" stroke="#555" stroke-width=".8"/><path d="M0,8.4 L4,9.5 C8,11 11,14 12.5,22.6 L7.2,20.1 L7,15 C6,13 4,12 1.5,13 Z" fill="#888"/></svg>
<svg class="a" style="left:686px;top:128px" width="24" height="24" viewBox="0 0 24 24"><path d="M2,11.4 L9.2,4 L21.6,6.3 L21.6,22 L9.2,20.3 L2,19.5 Z" fill="#8e8e8e" stroke="#555" stroke-width=".9" stroke-linejoin="round"/><path d="M2,11.4 L9.2,11.8 L9.2,20.3 L2,19.5 Z" fill="#777" stroke="#555" stroke-width=".8"/><path d="M9.2,11.8 L21.6,6.3 M9.2,4 V11.8" stroke="#555" stroke-width=".8" fill="none"/><rect x="4" y="14" width="3" height="3.5" fill="#555"/></svg>
<svg class="a" style="left:718px;top:128px" width="24" height="24" viewBox="0 0 24 24"><path d="M0.8,12.6 L8.2,2 L13,3.5 C15,8 19,12 23,15.7 L8,22 L0.8,21 Z" fill="#8e8e8e" stroke="#555" stroke-width=".9" stroke-linejoin="round"/><path d="M0.8,12.6 L7.4,13 L7.4,21.9 L0.8,21 Z" fill="#777" stroke="#555" stroke-width=".8"/><path d="M7.4,13 C10,10 11,6 13,3.5" stroke="#555" stroke-width=".8" fill="none"/><rect x="2.5" y="15.5" width="3.5" height="2.5" fill="#555"/><circle cx="22.2" cy="2.8" r="1.5" fill="#555"/></svg>
<svg class="a" style="left:750px;top:128px" width="24" height="24" viewBox="0 0 24 24"><path d="M0.3,22.3 L22.5,4.4" stroke="#555" stroke-width="1.6"/><path d="M6,16 C3,10 9,5 14,7 C18,9 18,15 14,17 C11,18 9,16 10,14" fill="none" stroke="#555" stroke-width="4.2"/><path d="M6,16 C3,10 9,5 14,7 C18,9 18,15 14,17 C11,18 9,16 10,14" fill="none" stroke="#8e8e8e" stroke-width="2.6"/><path d="M10,8 C11,3 14,1 16,1.5 C17,3 15,6 13,7.5 Z" fill="#8e8e8e" stroke="#555" stroke-width=".8"/><path d="M8,18 L9,22 L12,21.5 L11,17 Z" fill="#8e8e8e" stroke="#555" stroke-width=".7"/></svg>
<svg class="a" style="left:781px;top:128px" width="24" height="24" viewBox="0 0 24 24"><path d="M1.4,4.8 L10.1,0.9 L21.2,2.8 L21.2,16.4 L13.5,20.4 L1.8,17.8 Z" fill="#8e8e8e" stroke="#555" stroke-width=".9" stroke-linejoin="round"/><path d="M13.5,5.6 L21.2,2.8 L21.2,16.4 L13.5,20.4 Z" fill="#7a7a7a"/><path d="M1.4,4.8 L10.1,0.9 L21.2,2.8 L13.5,5.6 Z" fill="#9a9a9a"/><path d="M1.4,4.8 L13.5,5.6 L21.2,2.8 M13.5,5.6 V20.4 M1.8,17.8 L13.5,20.4 L21.2,16.4" stroke="#555" stroke-width="1.2" fill="none"/><g fill="#555"><circle cx="2.2" cy="18.2" r="1.9"/><circle cx="13.5" cy="20.4" r="1.9"/><circle cx="21.2" cy="16.4" r="1.9"/><circle cx="13.5" cy="5.6" r="1.9"/></g></svg>
<div class="a" style="left:811px;top:139px;width:0;height:0;border-left:4px solid transparent;border-right:4px solid transparent;border-top:4px solid #555"></div>
<div class="a" style="left:823px;top:127px;width:1px;height:26px;background:#d4d4d4;"></div>
<svg class="a" style="left:832px;top:128px" width="24" height="24" viewBox="0 0 24 24"><path d="M1 23V12l4-4 4-6 4 6 8-4v19z" fill="#9e9e9e" stroke="#6e6e6e"/><ellipse cx="15" cy="17" rx="4" ry="5" fill="#e6e6e6" stroke="#888"/></svg>
<svg class="a" style="left:863px;top:128px" width="24" height="24" viewBox="0 0 24 24"><path d="M1 23V12l20-10v21z" fill="#9e9e9e" stroke="#6e6e6e"/><rect x="3" y="10" width="4" height="4" fill="#eee" stroke="#777"/><rect x="9" y="8" width="4" height="4" fill="#eee" stroke="#777"/><rect x="15" y="6" width="4" height="4" fill="#eee" stroke="#777"/></svg>
<svg class="a" style="left:895px;top:128px" width="24" height="24" viewBox="0 0 24 24"><path d="M1 23V10l20-6v19z" fill="#9e9e9e" stroke="#6e6e6e"/><circle cx="7" cy="10" r="2.5" fill="#eee" stroke="#777"/><circle cx="14" cy="7" r="2.5" fill="#eee" stroke="#777"/><circle cx="17" cy="13" r="2.5" fill="#eee" stroke="#777"/><circle cx="9" cy="17" r="2.5" fill="#eee" stroke="#777"/></svg>
<svg class="a" style="left:926px;top:128px" width="24" height="24" viewBox="0 0 24 24"><path d="M1 23V10l10-6 12 4v15z" fill="#a8a8a8" stroke="#6e6e6e"/><rect x="12" y="4" width="9" height="9" fill="#ececec" stroke="#888"/><rect x="3" y="6" width="5" height="5" fill="#ececec" stroke="#888"/><rect x="13" y="15" width="7" height="7" fill="#f4f4f4" stroke="#888"/><rect x="5" y="15" width="5" height="5" fill="#777"/></svg>
<div class="a" style="left:956px;top:127px;width:1px;height:26px;background:#d4d4d4;"></div>
<svg class="a" style="left:964px;top:128px" width="24" height="24" viewBox="0 0 24 24"><path d="M2 10c0-5 6-8 11-8l10 3v12l-8 6-13-5z" fill="#8e8e8e" stroke="#6e6e6e"/><path d="M2 10l13 5 8-10M15 15v8" stroke="#555" fill="none"/><path d="M3 15l11 4" stroke="#ccc"/></svg>
<svg class="a" style="left:996px;top:128px" width="24" height="24" viewBox="0 0 24 24"><path d="M2 14l9-11h5l7 4v10l-8 6-13-5z" fill="#8e8e8e" stroke="#6e6e6e"/><path d="M2 14l13 5 8-12M15 19v4" stroke="#555" fill="none"/></svg>
<svg class="a" style="left:1028px;top:128px" width="24" height="24" viewBox="0 0 24 24"><path d="M2 6l10-5 11 4v13l-10 5-11-4z" fill="#8a8a8a" stroke="#6e6e6e"/><path d="M2 6l11 5 10-6M13 11v12" stroke="#555" fill="none"/><rect x="5" y="10" width="6" height="9" fill="#aaa" stroke="#666"/></svg>
<svg class="a" style="left:1060px;top:128px" width="24" height="24" viewBox="0 0 24 24"><path d="M4 4l10-4 9 4v14l-10 5-11-4z" fill="#8a8a8a" stroke="#6e6e6e"/><path d="M8 5v13l6 2 6-3V6l-6-3" fill="#b0b0b0" stroke="#555"/></svg>
<div class="a" style="left:1089px;top:127px;width:1px;height:26px;background:#d4d4d4;"></div>
<svg class="a" style="left:1097px;top:128px" width="24" height="24" viewBox="0 0 24 24"><circle cx="15" cy="9" r="8" fill="#9e9e9e" stroke="#6e6e6e"/><circle cx="8" cy="16" r="7.5" fill="#8a8a8a" stroke="#6e6e6e"/></svg>
<div class="a" style="left:1px;top:158px;width:487px;height:19px;background:#d9d9d9;"></div>
<div class="t" style="left:5.8px;top:164px;transform:scaleX(1.0154);">Комбо панель</div>
<svg class="a" style="left:473px;top:164px" width="9" height="9" viewBox="0 0 9 9"><rect x="2.5" y="0.5" width="6" height="5" fill="none" stroke="#222"/><rect x="0.5" y="3.5" width="6" height="5" fill="#d9d9d9" stroke="#222"/></svg>
<div class="a" style="left:3px;top:182px;width:60px;height:24px;background:#f0f0f0;border:1px solid #d9d9d9;border-bottom:none"></div>
<div class="t" style="left:12.8px;top:188px;transform:scaleX(0.9002);">Модель</div>
<div class="a" style="left:62px;top:180px;width:84px;height:27px;background:#fff;border:1px solid #d9d9d9;border-bottom:none"></div>
<svg class="a" style="left:77px;top:184px" width="16" height="16" viewBox="0 0 16 16"><path d="M0.5,3.5 L3.5,0.5 L13.5,10.5 L15.5,15.5 L10.5,13.5 Z" fill="#2c4c8c" stroke="#14244c" stroke-width=".8"/><path d="M10.5,13.5 L13.5,10.5 L15.5,15.5 Z" fill="#f4f4f4" stroke="#555" stroke-width=".5"/><path d="M2,1.8 L12.5,12.3" stroke="#6a8ac8" stroke-width=".8"/></svg>
<div class="t" style="left:96.4px;top:187px;transform:scaleX(0.9057);">Задачи</div>
<div class="a" style="left:1px;top:205px;width:487px;height:858px;background:#fff;border:1px solid #d9d9d9;border-left-color:#f4f4f4"></div>
<div class="a" style="left:4px;top:207px;width:480px;height:852px;background:linear-gradient(#acacc4 0px,#8e8eaa 60px,#333366 360px,#333366 853px);"></div>
<div class="a" style="left:165px;top:225px;width:76px;height:22px;background:#e1e1e1;border:2px solid #0078d7"></div>
<div class="t" style="left:195.2px;top:230px;transform:scaleX(0.8555);">OK</div>
<div class="a" style="left:249px;top:226px;width:74px;height:21px;background:#e1e1e1;border:1px solid #c9c9d3"></div>
<div class="t" style="left:266.0px;top:230px;transform:scaleX(0.8863);">Отмена</div>
<div class="a" style="left:12px;top:266px;width:464px;height:350px;background:#d6ddf6;border-radius:4px 4px 0 0;border-right:1px solid #f2f5ff;border-bottom:1px solid #f2f5ff"></div>
<div class="a" style="left:12px;top:266px;width:464px;height:25px;background:linear-gradient(90deg,#f4f6fd,#dbe3f8 45%,#c6d3f4);border-radius:4px 4px 0 0;border-top:1px solid #dde2f0;border-right:1px solid #f2f5ff"></div>
<div class="a" style="left:12px;top:290px;width:464px;height:1px;background:#fbfcff;"></div>
<div class="a" style="left:12px;top:615px;width:464px;height:1px;background:#eef1fb;"></div>
<svg class="a" style="left:18px;top:270px" width="17" height="16" viewBox="0 0 17 16"><path d="M1,11.5 L8,9 L16,11.5 L8.5,15 Z" fill="#fff" stroke="#666" stroke-width="1"/><path d="M1.5,4.5 L8,2 L15.5,4 L15.5,8.5 L9,11 L1.5,9 Z" fill="#e8d820" stroke="#6a6010" stroke-width=".8"/><path d="M1.5,4.5 L9,6.5 L15.5,4 Z" fill="#fff27a" stroke="#6a6010" stroke-width=".7"/><path d="M9,6.5 V11" stroke="#6a6010" stroke-width=".7"/></svg>
<div class="t" style="left:36.8px;top:273px;color:#2154c8;font-weight:bold;transform:scaleX(0.9671);">Параметры выдавливания</div>
<svg class="a" style="left:455px;top:269px" width="18" height="18" viewBox="455 269 18 18"><circle cx="463.9" cy="277.8" r="7" fill="#fff" stroke="#bcc4de" stroke-width=".9" stroke-dasharray="1.2 1"/><path d="M461.2,277.4 L463.9,274.6 L466.6,277.4 M461.2,281.4 L463.9,278.7 L466.6,281.4" stroke="#0a3cb0" stroke-width="1.6" fill="none" stroke-linecap="round"/></svg>
<div class="t" style="left:26.7px;top:308px;transform:scaleX(0.9150);">Тип</div>
<div class="a" style="left:248px;top:304px;width:213px;height:20px;background:#e5e5e5;border:1px solid #adadad"></div>
<div class="t" style="left:251.4px;top:308px;transform:scaleX(0.9709);">Размер</div>
<svg class="a" style="left:448px;top:311px" width="8" height="5" viewBox="0 0 8 5"><path d="M0.5 0.5L4 4l3.5-3.5" stroke="#333" fill="none"/></svg>
<div class="t" style="left:25.9px;top:336px;transform:scaleX(0.9174);">Длина</div>
<div class="a" style="left:248px;top:329px;width:213px;height:22px;background:#fff;border:1px solid #7a7a7a;border-left-color:#adadad;border-right-color:#adadad"></div>
<div class="t" style="left:250.4px;top:336px;transform:scaleX(0.8992);">20 mm</div>
<svg class="a" style="left:430px;top:331px" width="12" height="12" viewBox="0 0 12 12"><circle cx="6" cy="6" r="5.2" fill="#d4def0" stroke="#6a8cc0" stroke-width="1"/><circle cx="6" cy="6" r="3.6" fill="none" stroke="#a8bede" stroke-width=".6"/><path d="M3.2 8.5c1-1 .8-5 2.3-5M3 6h2.2M6.5 4.5l2.2 4M8.7 4.5L6.5 8.5" stroke="#4a6aa8" stroke-width=".8" fill="none"/></svg>
<div class="a" style="left:445px;top:330px;width:14px;height:10px;background:#e8e8e8;border:1px solid #c4c4c4"></div>
<div class="a" style="left:445px;top:340px;width:14px;height:10px;background:#e8e8e8;border:1px solid #c4c4c4"></div>
<div class="a" style="left:448.5px;top:333px;width:0;height:0;border-left:3.5px solid transparent;border-right:3.5px solid transparent;border-bottom:4px solid #000"></div>
<div class="a" style="left:448.5px;top:342px;width:0;height:0;border-left:3.5px solid transparent;border-right:3.5px solid transparent;border-top:4px solid #000"></div>
<div class="a" style="left:27px;top:369px;width:434px;height:92px;background:transparent;border:1px solid #bcc0cc;border-radius:3px"></div>
<div class="a" style="left:38px;top:363px;width:78px;height:12px;background:#d6ddf6;"></div>
<div class="t" style="left:43.5px;top:364px;transform:scaleX(0.9080);">Направление</div>
<div class="t" style="left:38.3px;top:385px;transform:scaleX(0.9380);">Direction/edge:</div>
<div class="a" style="left:248px;top:381px;width:201px;height:20px;background:#e5e5e5;border:1px solid #adadad"></div>
<div class="t" style="left:251.3px;top:385px;transform:scaleX(0.9166);">Sketch normal</div>
<svg class="a" style="left:436px;top:389px" width="8" height="5" viewBox="0 0 8 5"><path d="M0.5 0.5L4 4l3.5-3.5" stroke="#333" fill="none"/></svg>
<div class="a" style="left:39px;top:409px;width:13px;height:13px;background:#fff;border:1px solid #333"></div>
<div class="t" style="left:56.2px;top:411px;transform:scaleX(0.9327);">Show direction</div>
<div class="a" style="left:39px;top:433px;width:13px;height:13px;background:#fff;border:1px solid #333"></div>
<svg class="a" style="left:39px;top:433px" width="13" height="13" viewBox="0 0 13 13"><path d="M2.5 6.5l2.8 2.8 5.2-5.8" stroke="#222" stroke-width="1.2" fill="none"/></svg>
<div class="t" style="left:56.2px;top:435px;transform:scaleX(0.9328);">Length along sketch normal</div>
<div class="a" style="left:26px;top:470px;width:13px;height:13px;background:#f2f4fc;border:1px solid #d8dcec"></div>
<div class="t" style="left:44.3px;top:472px;color:#8c8c8c;transform:scaleX(0.9194);">Симметрично плоскости</div>
<div class="a" style="left:26px;top:495px;width:13px;height:13px;background:#fff;border:1px solid #333"></div>
<svg class="a" style="left:26px;top:495px" width="13" height="13" viewBox="0 0 13 13"><path d="M2.5 6.5l2.8 2.8 5.2-5.8" stroke="#222" stroke-width="1.2" fill="none"/></svg>
<div class="t" style="left:44.3px;top:497px;transform:scaleX(0.9342);">В обратную сторону</div>
<div class="t" style="left:26.9px;top:523px;transform:scaleX(0.9250);">Taper angle</div>
<div class="a" style="left:248px;top:517px;width:213px;height:23px;background:#fff;border:1px solid #7a7a7a"></div>
<div class="t" style="left:250.3px;top:524px;transform:scaleX(0.9619);">0,00 °</div>
<svg class="a" style="left:430px;top:518px" width="12" height="12" viewBox="0 0 12 12"><circle cx="6" cy="6" r="5.2" fill="#d4def0" stroke="#6a8cc0" stroke-width="1"/><circle cx="6" cy="6" r="3.6" fill="none" stroke="#a8bede" stroke-width=".6"/><path d="M3.2 8.5c1-1 .8-5 2.3-5M3 6h2.2M6.5 4.5l2.2 4M8.7 4.5L6.5 8.5" stroke="#4a6aa8" stroke-width=".8" fill="none"/></svg>
<div class="a" style="left:445px;top:519px;width:14px;height:9px;background:#e8e8e8;border:1px solid #c4c4c4"></div>
<div class="a" style="left:445px;top:528px;width:14px;height:10px;background:#e8e8e8;border:1px solid #c4c4c4"></div>
<div class="a" style="left:448.5px;top:522px;width:0;height:0;border-left:3.5px solid transparent;border-right:3.5px solid transparent;border-bottom:4px solid #000"></div>
<div class="a" style="left:448.5px;top:530px;width:0;height:0;border-left:3.5px solid transparent;border-right:3.5px solid transparent;border-top:4px solid #000"></div>
<div class="a" style="left:27px;top:547px;width:67px;height:21px;background:#cccccc;border:1px solid #c4c4c4"></div>
<div class="t" style="left:33.0px;top:552px;color:#8a8a8a;transform:scaleX(0.8990);">Select face</div>
<div class="a" style="left:100px;top:547px;width:361px;height:20px;background:#f0f0f0;border:1px solid #dde0ea"></div>
<div class="t" style="left:102.9px;top:552px;color:#8a8a8a;transform:scaleX(0.9224);">Грань не выбрана</div>
<div class="a" style="left:27px;top:575px;width:434px;height:1px;background:#fbfcff;"></div>
<div class="a" style="left:26px;top:585px;width:13px;height:13px;background:#fff;border:1px solid #333"></div>
<svg class="a" style="left:26px;top:585px" width="13" height="13" viewBox="0 0 13 13"><path d="M2.5 6.5l2.8 2.8 5.2-5.8" stroke="#222" stroke-width="1.2" fill="none"/></svg>
<div class="t" style="left:44.3px;top:587px;transform:scaleX(0.9098);">Обновить</div>
<div class="a" style="left:488px;top:158px;width:5px;height:881px;background:#f0f0f0;"></div>
<div class="a" style="left:493px;top:158px;width:1306px;height:881px;background:linear-gradient(#333366,#9495a8);"></div>
<div class="a" style="left:493px;top:157px;width:1306px;height:1px;background:#b8b8de;"></div>
<div class="a" style="left:493px;top:158px;width:1306px;height:1px;background:#24246c;"></div>
<svg class="a" style="left:0;top:0" width="1800" height="1094" viewBox="0 0 1800 1094">
<polygon points="725,329 626.5,427.5 1534.5,727.5 1632.5,630" fill="#808080"/>
<polygon points="626.5,427.5 1534.5,727.5 1534.5,943 626.5,643" fill="#9c9c9c"/>
<polygon points="1534.5,727.5 1632.5,630 1632.5,846 1534.5,943" fill="#5f5f5f"/>
<path d="M725,329 L626.5,427.5 L626.5,643 L1534.5,943 L1632.5,846 L1632.5,630 Z M626.5,427.5 L1534.5,727.5 L1632.5,630 M1534.5,727.5 L1534.5,943" fill="none" stroke="#1a1a1a" stroke-width="1.15" stroke-linejoin="miter"/>
<path d="M725,329 L1632.5,630" stroke="#1a1a1a" stroke-width="1.15"/>
</svg>
<svg class="a" style="left:1695px;top:158px" width="104" height="100" viewBox="1695 158 104 100">
<g fill="#8c8cb2">
<path d="M1749.3,163 L1741.9,171 L1756.7,171 Z"/>
<path d="M1704.7,208 L1713,200.5 L1713,215.8 Z"/>
<path d="M1794.6,208 L1786.2,200.5 L1786.2,215.8 Z"/>
<path d="M1749.3,253 L1742,245.2 L1756.8,245.2 Z"/>
<circle cx="1790.5" cy="167" r="4.3"/>
<path d="M1717,187 c4,-7 10,-11 19,-14 l1,4 c-7,2 -11,5 -15,10 l3,1 -10,0 z"/>
<path d="M1782,187 c-4,-7 -10,-11 -19,-14 l-1,4 c7,2 11,5 15,10 l-3,1 10,0 z"/>
</g>
<path d="M1766,239 l6.5,-2.5 7,2 v9 l-7,2.5 -6.5,-2 z" fill="#7c7ca4"/><path d="M1766,239 l6.5,2 7,-2 M1772.5,241 v8.5" stroke="#6a6a92" stroke-width=".6" fill="none"/>
<path d="M1781,241 h9 l-4.5,4 z" fill="#40406a"/>
<path d="M1724.4,198.3 L1727,194 L1744.7,184 L1771,192 L1773.2,195 L1772.5,200 L1770.5,218 L1761,232 L1755,236 L1752.9,235.5 L1729.4,225.7 L1725,201.6 Z" fill="#b6b8ce" stroke="#2a2a3a" stroke-width=".8"/>
<path d="M1725,201.6 L1755,210 C1757,211 1759,211 1761,210 L1773,197 M1755,210 L1753,235.5 M1760.5,210.5 L1759,233.5" stroke="#2a2a3a" stroke-width=".8" fill="none"/>
<path d="M1727,195 L1744.5,187 L1770,195" stroke="#2a2a3a" stroke-width=".5" fill="none"/>
<text x="0" y="0" font-size="6" font-weight="bold" font-family="Liberation Sans" fill="#1a1a1a" stroke="#1a1a1a" stroke-width=".35" transform="translate(1731.5,217) rotate(20) scale(0.88,1.45)">FRONT</text>
<text x="0" y="0" font-size="5" font-weight="bold" font-family="Liberation Sans" fill="#1a1a1a" transform="translate(1746,193) rotate(12) scale(1,1.2)">TOP</text>
<text x="0" y="0" font-size="5" font-family="Liberation Sans" fill="#666" opacity=".7" transform="translate(1764,223) rotate(-58)">RIGHT</text>
<path d="M1718.4,204.8 L1723.7,226.8" stroke="#0000ff" stroke-width="1"/>
<path d="M1723.7,226.8 L1747.5,239.4" stroke="#ff0000" stroke-width="1.2"/>
<path d="M1723.7,226.8 L1739.8,212.5" stroke="#33ff33" stroke-width=".8"/>
</svg>
<svg class="a" style="left:1740px;top:955px" width="55" height="55" viewBox="1740 955 55 55">
<path d="M1755.3,995.2 V974" stroke="#22228a" stroke-width="2"/>
<path d="M1755.3,966 L1751.6,977.5 L1759,977.5 Z" fill="#22228a"/>
<path d="M1755.3,995.2 L1765,986" stroke="#1a8a1a" stroke-width="1.6"/>
<path d="M1768,983 L1761,985.5 L1765,989.5 Z" fill="#1a8a1a"/>
<path d="M1755.3,995.2 L1777,1002.5" stroke="#8a1a1a" stroke-width="1.8"/>
<path d="M1783.6,1004.4 L1773.5,999 L1772,1004 Z" fill="#8a1a1a"/>
<text x="1756" y="966" font-size="7" font-family="Liberation Sans" fill="#000">Z</text>
<text x="1768" y="983" font-size="7" font-family="Liberation Sans" fill="#000">Y</text>
<text x="1785" y="1005" font-size="7" font-family="Liberation Sans" fill="#000">X</text>
</svg>
<div class="a" style="left:1799px;top:0px;width:1px;height:1094px;background:#8a8a8a;"></div>
<div class="a" style="left:1797px;top:123px;width:1px;height:34px;background:#b0b0b0;"></div>
<div class="a" style="left:493px;top:1039px;width:101px;height:24px;background:#fff;border-bottom:1px solid #dadada"></div>
<svg class="a" style="left:505px;top:1043px" width="17" height="16" viewBox="0 0 17 16"><path d="M1 0h8v3H4.5v3H8v3H4.5v6.5H1z" fill="#cc1010"/><g transform="translate(11.5,10.5)"><circle r="3.6" fill="#3a68b0"/><path d="M-.9 -5h1.8v10h-1.8zM-5 -.9h10v1.8h-10z" fill="#3a68b0" transform="rotate(22)"/><path d="M-.9 -5h1.8v10h-1.8zM-5 -.9h10v1.8h-10z" fill="#3a68b0" transform="rotate(67)"/><circle r="1.4" fill="#fff"/></g></svg>
<div class="t" style="left:525.7px;top:1046px;">02 : 1*</div>
<svg class="a" style="left:566px;top:1044px" width="14" height="15" viewBox="0 0 14 15"><rect x=".5" y=".5" width="13" height="14" rx="2" fill="#e87850" stroke="#dc4a30"/><path d="M4 4.5l6 6M10 4.5l-6 6" stroke="#fff" stroke-width="2"/></svg>
<div class="t" style="left:2.7px;top:1074px;transform:scaleX(0.8861);">Preselected:</div>
<div class="a" style="left:67px;top:1084px;width:123px;height:1px;background:#505050;"></div>
<div class="t" style="left:190.1px;top:1074px;transform:scaleX(0.9362);">.Body.Pad.Face5 (12.472032 mm, -0.137674 mm, 0.000000 mm)</div>
<div class="a" style="left:1568px;top:1067px;width:1px;height:24px;background:#d4d4d4;"></div>
<div class="a" style="left:1651px;top:1067px;width:1px;height:24px;background:#d4d4d4;"></div>
<div class="a" style="left:1780px;top:1067px;width:1px;height:24px;background:#d4d4d4;"></div>
<svg class="a" style="left:1590px;top:1072px" width="10" height="14" viewBox="0 0 10 14"><rect x="1" y="1" width="8" height="12" rx="4" fill="none" stroke="#222" stroke-width="1.2"/><path d="M5 3v3" stroke="#222" stroke-width="1.2"/></svg>
<div class="t" style="left:1604.0px;top:1074px;transform:scaleX(0.8379);">CAD</div>
<div class="a" style="left:1636px;top:1077px;width:0;height:0;border-left:4px solid transparent;border-right:4px solid transparent;border-top:4px solid #000"></div>
<div class="t" style="left:1655.2px;top:1074px;transform:scaleX(0.9489);">99,38 mm x 67,03 mm</div>
<div class="a" style="left:1788px;top:1084px;width:10px;height:9px;background:radial-gradient(circle,#b0b0b0 0.8px,transparent 1px) 0 0/3px 3px"></div>
<div class="a" style="left:0px;top:1093px;width:1800px;height:1px;background:#8a8a8a;"></div>
</body></html>
